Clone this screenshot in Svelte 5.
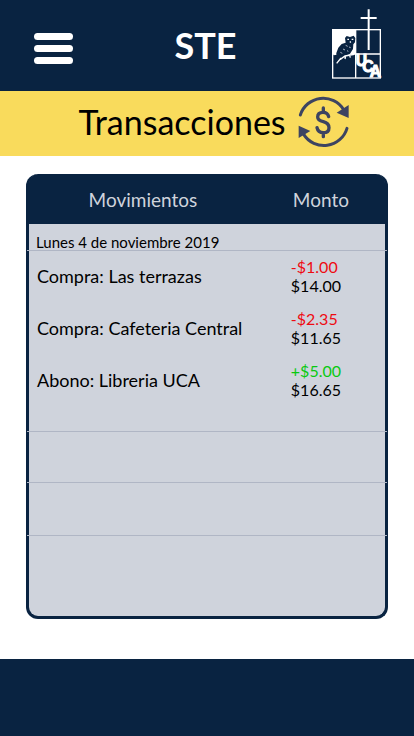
<script>
  const movements = [
    { label: 'Compra: Las terrazas', amount: '-$1.00', balance: '$14.00', kind: 'out' },
    { label: 'Compra: Cafeteria Central', amount: '-$2.35', balance: '$11.65', kind: 'out' },
    { label: 'Abono: Libreria UCA', amount: '+$5.00', balance: '$16.65', kind: 'in' }
  ];
  const emptyRows = [25, 51, 53, 80];
</script>

<div class="page">
  <header class="top">
    <button class="menu" aria-label="Menú">
      <span></span><span></span><span></span>
    </button>
    <h1>STE</h1>
    <svg class="logo" viewBox="0 0 186 234" role="img" aria-label="UCA">
      <rect x="23" y="71" width="143" height="145" fill="none" stroke="#fff" stroke-width="4" />
      <path d="M22 70H92V144H22Z" fill="#fff" />
      <path d="M92 72V216M22 144H166" stroke="#fff" stroke-width="4" />
      <path d="M131 10V132M107 36H155" stroke="#fff" stroke-width="6" />
      <path d="M60 96L65 90L75 93L86 89L91 96L90 109L85 115L84 129L75 143L62 149L47 155L33 171L26 168L32 146L40 125L50 114L62 110Z" fill="#092341" />
      <path d="M67 100h5M80 100h5M75 106l2 4" stroke="#fff" stroke-width="4" fill="none" />
      <path d="M62 118l6 3M72 123l5 2M54 129l6 3M46 139l6 3M66 134l4 2" stroke="#aab3c2" stroke-width="3" fill="none" />
      <path d="M26 146L34 144M46 160L60 150L88 145M62 149l-2 10M73 145l3 10M35 172L48 156" stroke="#fff" stroke-width="4" fill="none" />
      <text class="initials" x="92 112 134" y="181 199 214" fill="#fff" stroke="#fff" stroke-width="3">UCA</text>
    </svg>
  </header>

  <section class="banner">
    <h2>Transacciones</h2>
    <svg class="cycle" viewBox="0 0 156 156" aria-hidden="true">
      <g fill="none" stroke="#3d4461" stroke-width="9" stroke-linecap="round">
        <path d="M7 57A72 72 0 0 1 137 41" />
        <path d="M147 97A72 72 0 0 1 17 115" />
        <path stroke-width="10" d="M92 62C90 52 84 49 75 49C64 49 59 55 59 63C59 73 67 75 76 77C87 80 93 84 93 95C93 105 86 110 76 110C65 110 59 105 57 95M76 36V48M76 111V122" />
      </g>
      <path d="M152 27V66L116 50ZM2 89L37 105L2 126Z" fill="#3d4461" />
    </svg>
  </section>

  <main>
    <div class="card">
      <table>
        <thead>
          <tr><th class="name" scope="col">Movimientos</th><th scope="col">Monto</th></tr>
        </thead>
        <tbody>
          <tr class="date"><td class="ruled" colspan="2">Lunes 4 de noviembre 2019</td></tr>
          {#each movements as item}
            <tr class="movement">
              <td>{item.label}</td>
              <td class="money"><span class={item.kind}>{item.amount}</span><span>{item.balance}</span></td>
            </tr>
          {/each}
          {#each emptyRows as height, i}
            <tr style:height="{height}px"><td class:ruled={i < emptyRows.length - 1} colspan="2"></td></tr>
          {/each}
        </tbody>
      </table>
    </div>
  </main>
  <footer></footer>
</div>

<style>
  :global(body) { margin: 0; background: #fff; }
  .page {
    min-height: 100vh;
    display: flex;
    flex-direction: column;
    font-family: "Century Gothic", Lato, sans-serif;
    color: #000;
  }
  .top {
    height: 91px;
    box-sizing: border-box;
    padding: 0 27px 0 34px;
    display: grid;
    grid-template-columns: 1fr auto 1fr;
    align-items: center;
    background: #092341;
    color: #fff;
  }
  .menu {
    width: 39px;
    padding: 0;
    border: 0;
    background: none;
    display: flex;
    flex-direction: column;
    gap: 5px;
    margin-top: 6px;
    cursor: pointer;
  }
  .menu span { height: 7px; border-radius: 4px; background: #fff; }
  h1 { margin: 0 10px 2px 0; font-size: 36px; line-height: 48px; font-weight: 700; }
  .logo { width: 62px; height: 78px; justify-self: end; margin-bottom: 2px; }
  .initials { font-family: "Liberation Sans Narrow", "Liberation Sans", sans-serif; font-size: 47px; font-weight: 700; }
  .banner {
    height: 65px;
    box-sizing: border-box;
    padding: 0 0 4px 14px;
    display: flex;
    align-items: center;
    justify-content: center;
    gap: 12px;
    background: #f9db5c;
  }
  h2 { margin: 0; font-size: 34px; line-height: 40px; font-weight: 400; }
  .cycle { width: 52px; height: 52px; }
  main { flex: 1; padding: 18px 26px 40px; }
  .card {
    background: #cfd3dc;
    border: 3px solid #092341;
    border-top: 0;
    border-radius: 12px;
  }
  table { width: 100%; border-collapse: collapse; table-layout: fixed; }
  th, td { padding: 0; text-align: left; font-weight: 400; }
  thead tr { height: 50px; }
  th { padding-top: 2px; background: #092341; color: #cfd3dc; font-size: 19px; line-height: 24px; text-align: center; }
  th:first-child { border-top-left-radius: 9px; }
  th:last-child { border-top-right-radius: 9px; }
  .name { width: 64%; }
  .ruled { position: relative; }
  .ruled::after {
    content: "";
    position: absolute;
    left: -2px;
    right: -2px;
    bottom: 0;
    height: 1px;
    background: #b0b6c5;
  }
  .date { height: 27px; }
  .date td { padding: 9px 7px 0; font-size: 15px; line-height: 18px; }
  .movement { height: 52px; }
  .movement td { padding-left: 8px; padding-bottom: 2px; font-size: 18px; line-height: 19px; white-space: nowrap; }
  .movement .money { padding-left: 34px; font-size: 16px; }
  .money span { display: block; }
  .money .out { color: #ee0b12; }
  .money .in { color: #08c910; }
  footer { height: 77px; background: #092341; }
</style>
